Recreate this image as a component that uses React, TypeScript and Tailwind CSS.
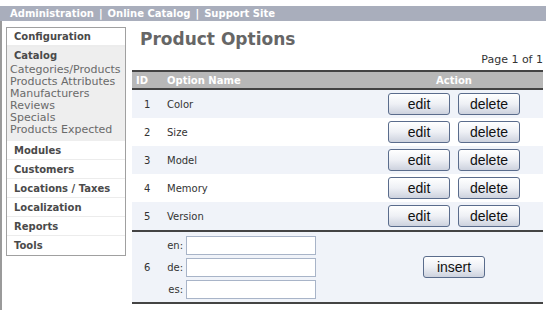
import React from 'react';

const font = { fontFamily: 'Verdana, "DejaVu Sans", sans-serif' };

const catalogLinks = [
  'Categories/Products',
  'Products Attributes',
  'Manufacturers',
  'Reviews',
  'Specials',
  'Products Expected',
];

const sections = ['Modules', 'Customers', 'Locations / Taxes', 'Localization', 'Reports', 'Tools'];

const options = [
  { id: 1, name: 'Color' },
  { id: 2, name: 'Size' },
  { id: 3, name: 'Model' },
  { id: 4, name: 'Memory' },
  { id: 5, name: 'Version' },
];

function Btn({ label }: { label: string }) {
  return (
    <button
      className="w-[62px] h-[22px] rounded-[3px] border border-[#5a6c8c] bg-gradient-to-b from-white via-[#eef0f5] to-[#cdd2de] text-[14px] leading-none text-[#111]"
      style={{ fontFamily: '"Liberation Sans", Arial, sans-serif' }}
    >
      {label}
    </button>
  );
}

export default function App() {
  return (
    <div className="w-[546px] h-[310px] overflow-hidden bg-white text-[10px]" style={font}>
      {/* cut-off site header */}
      <div className="h-[6px] overflow-hidden">
        <div className="mt-[-10px] pl-[122px] text-[11px] font-bold leading-[14px] text-[#d0d0d0]">osCommerce Online Merchant</div>
      </div>

      {/* top nav */}
      <div className="flex h-[15px] bg-[#a9aebc] pl-[10px] text-[10px] font-bold leading-[15px] text-white">
        <span>Administration</span>
        <span className="px-[5px]">|</span>
        <span>Online Catalog</span>
        <span className="px-[5px]">|</span>
        <span>Support Site</span>
      </div>

      <div className="flex h-[289px] border-l-2 border-[#9a9a9a]">
        {/* sidebar */}
        <div className="ml-[4px] mt-[6px] w-[120px] self-start border border-[#a0a0a0] bg-white">
          <div className="h-[19px] border-b-2 border-[#ececec] pl-[7px] font-bold leading-[18px] text-[#4a4a4a]">Configuration</div>
          <div className="bg-[#eeeeee]">
            <div className="h-[17px] pl-[7px] font-bold leading-[17px] text-[#4a4a4a]">Catalog</div>
            <div className="pb-[5px] pl-[3px] text-[11px] leading-[12px] text-[#6a6a6a]">
              {catalogLinks.map(l => (
                <div key={l}>{l}</div>
              ))}
            </div>
          </div>
          {sections.map((s, i) => (
            <div
              key={s}
              className={`h-[19px] pl-[7px] font-bold leading-[19px] text-[#4a4a4a] ${i < sections.length - 1 ? 'border-b border-[#ececec]' : ''}`}
            >
              {s}
            </div>
          ))}
        </div>

        {/* main */}
        <div className="ml-[6px] w-[411px]">
          <h1 className="mt-[4px] pl-[8px] text-[17px] font-bold leading-[28px] text-[#666]">Product Options</h1>
          <div className="h-[14px] text-right text-[11px] leading-[14px] text-[#333]">Page 1 of 1</div>

          <div className="mt-[3px] border-t-2 border-[#444]">
            <div className="flex h-[18px] items-center border-b-2 border-[#444] bg-[#b8b8b8] font-bold text-white">
              <div className="w-[35px] pl-[4px]">ID</div>
              <div className="flex-1">Option Name</div>
              <div className="w-[155px] pr-[23px] text-center">Action</div>
            </div>
            {options.map((o, i) => (
              <div
                key={o.id}
                className={`flex h-[28px] items-center text-[#333] ${i % 2 === 0 ? 'bg-[#f0f3f9]' : 'bg-white'}`}
              >
                <div className="w-[35px] pl-[12px]">{o.id}</div>
                <div className="flex-1">{o.name}</div>
                <div className="flex w-[155px] gap-[8px]">
                  <Btn label="edit" />
                  <Btn label="delete" />
                </div>
              </div>
            ))}
            <div className="flex h-[74px] items-center border-y-2 border-[#444] bg-[#f0f3f9] text-[#333]">
              <div className="w-[31px] pl-[12px]">6</div>
              <div className="flex flex-col gap-[3px]">
                {['en', 'de', 'es'].map(l => (
                  <div key={l} className="flex items-center">
                    <span className="w-[23px] text-right pr-[3px]">{l}:</span>
                    <input className="h-[19px] w-[130px] border border-[#a8b4c8] bg-white" />
                  </div>
                ))}
              </div>
              <div className="flex-1" />
              <div className="flex w-[155px] justify-center pr-[23px]">
                <Btn label="insert" />
              </div>
            </div>
          </div>
        </div>
      </div>
    </div>
  );
}
